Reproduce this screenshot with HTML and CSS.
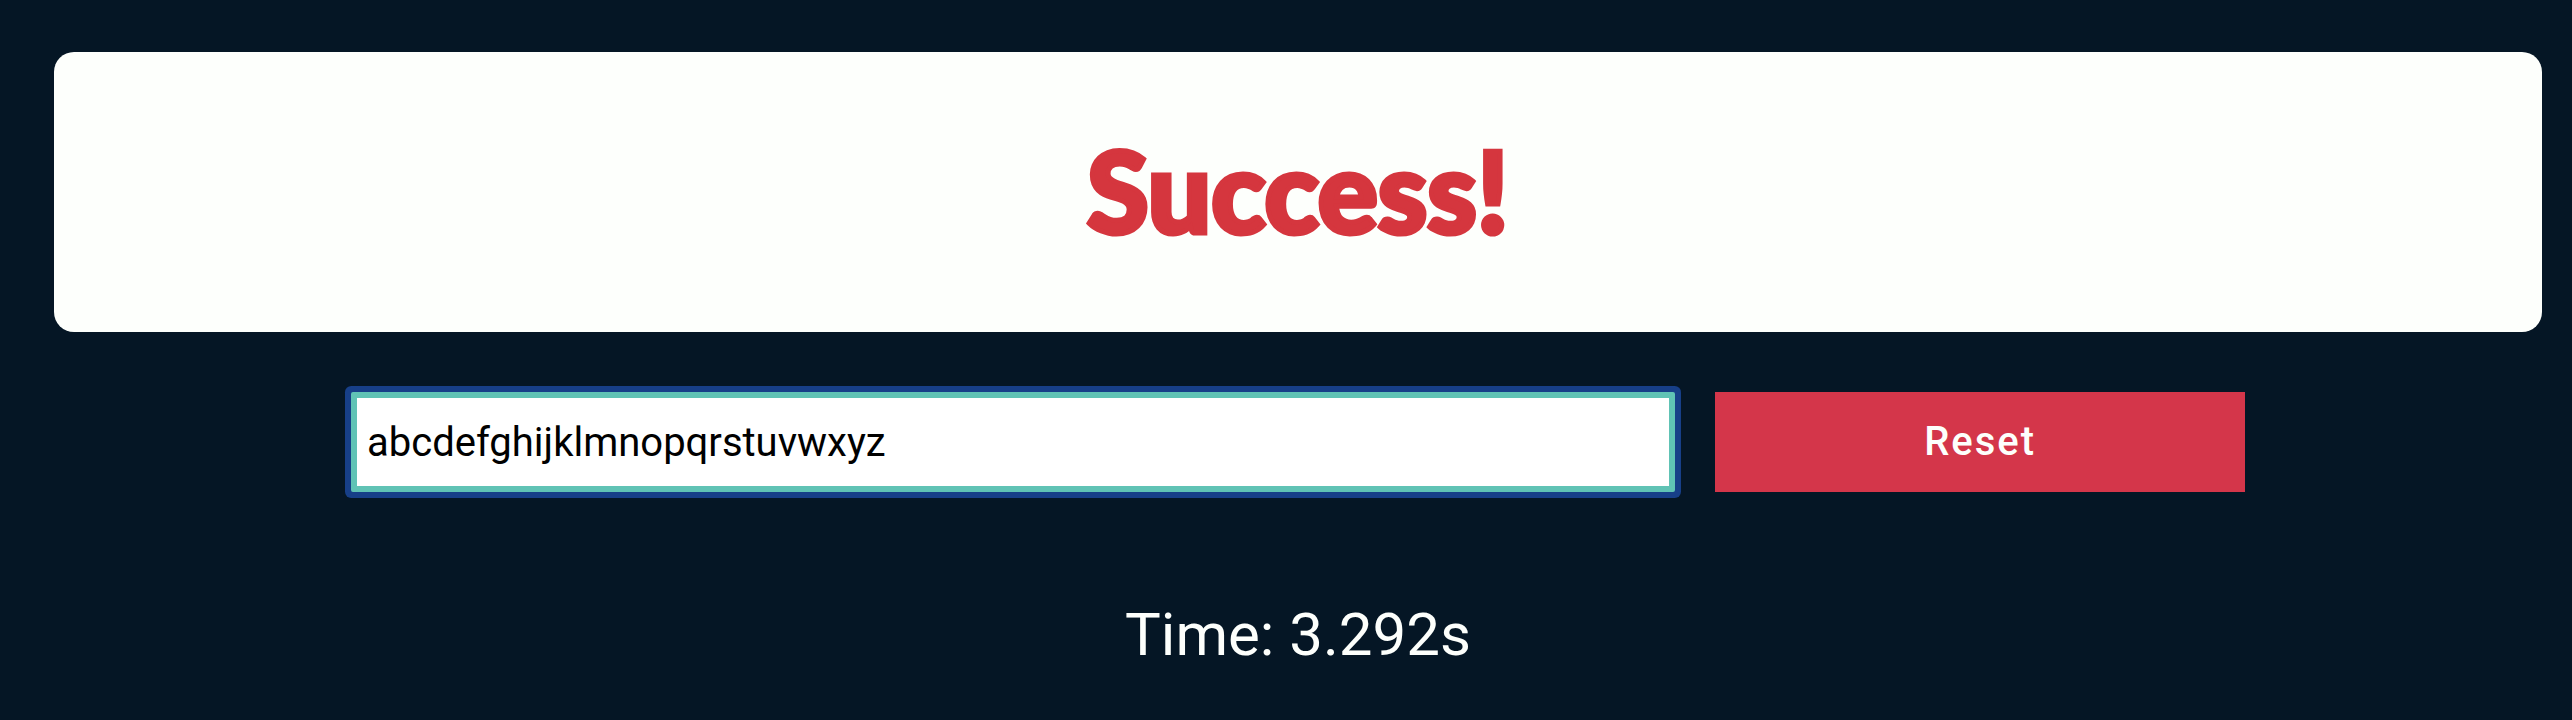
FILE: index.html
```html
<!DOCTYPE html>
<html lang="en">
<head>
<meta charset="utf-8">
<meta name="viewport" content="width=device-width, initial-scale=1">
<title>Typing Test</title>
<link rel="stylesheet" href="styles.css">
</head>
<body>
<main class="game">
  <section class="card"><h1 class="result">Success!</h1></section>
  <form class="controls">
    <input class="entry" type="text" aria-label="Type the alphabet" value="abcdefghijklmnopqrstuvwxyz" autocomplete="off" spellcheck="false">
    <button class="reset" type="button">Reset</button>
  </form>
  <p class="time">Time: 3.292s</p>
</main>
</body>
</html>
```
FILE: styles.css
```css
* {
  box-sizing: border-box;
}

body {
  margin: 0;
  background: #051625;
  color: #fdfffc;
  font-family: Roboto, sans-serif;
}

.game {
  padding: 52px 30px 28px 54px;
}

.card {
  padding: 66px 24px 70px;
  border-radius: 20px;
  background: #fdfffc;
  text-align: center;
}

.result {
  margin: 0;
  color: #d5363e;
  font-family: Lato, sans-serif;
  font-size: 112px;
  font-weight: 900;
  line-height: 144px;
  -webkit-text-stroke: 5px #d5363e;
}

.controls {
  display: grid;
  grid-template-columns: 5fr 2fr;
  gap: 40px;
  max-width: 1894px;
  margin: 60px auto 0;
}

.entry,
.reset {
  min-width: 0;
  height: 100px;
  border: 0;
  border-radius: 0;
  font-family: inherit;
  font-size: 40px;
}

.entry {
  padding: 0 10px;
  border: 6px solid #60c3b5;
  border-radius: 2px;
  background: #fff;
  color: #000;
  box-shadow: 0 0 0 6px #173f88;
  outline: none;
}

.reset {
  padding: 0 12px 2px;
  background: #d4364a;
  color: #fdfffc;
  font-weight: 500;
  letter-spacing: 2px;
}

.time {
  margin: 108px 0 0;
  font-size: 60px;
  line-height: 70px;
  text-align: center;
}
```
